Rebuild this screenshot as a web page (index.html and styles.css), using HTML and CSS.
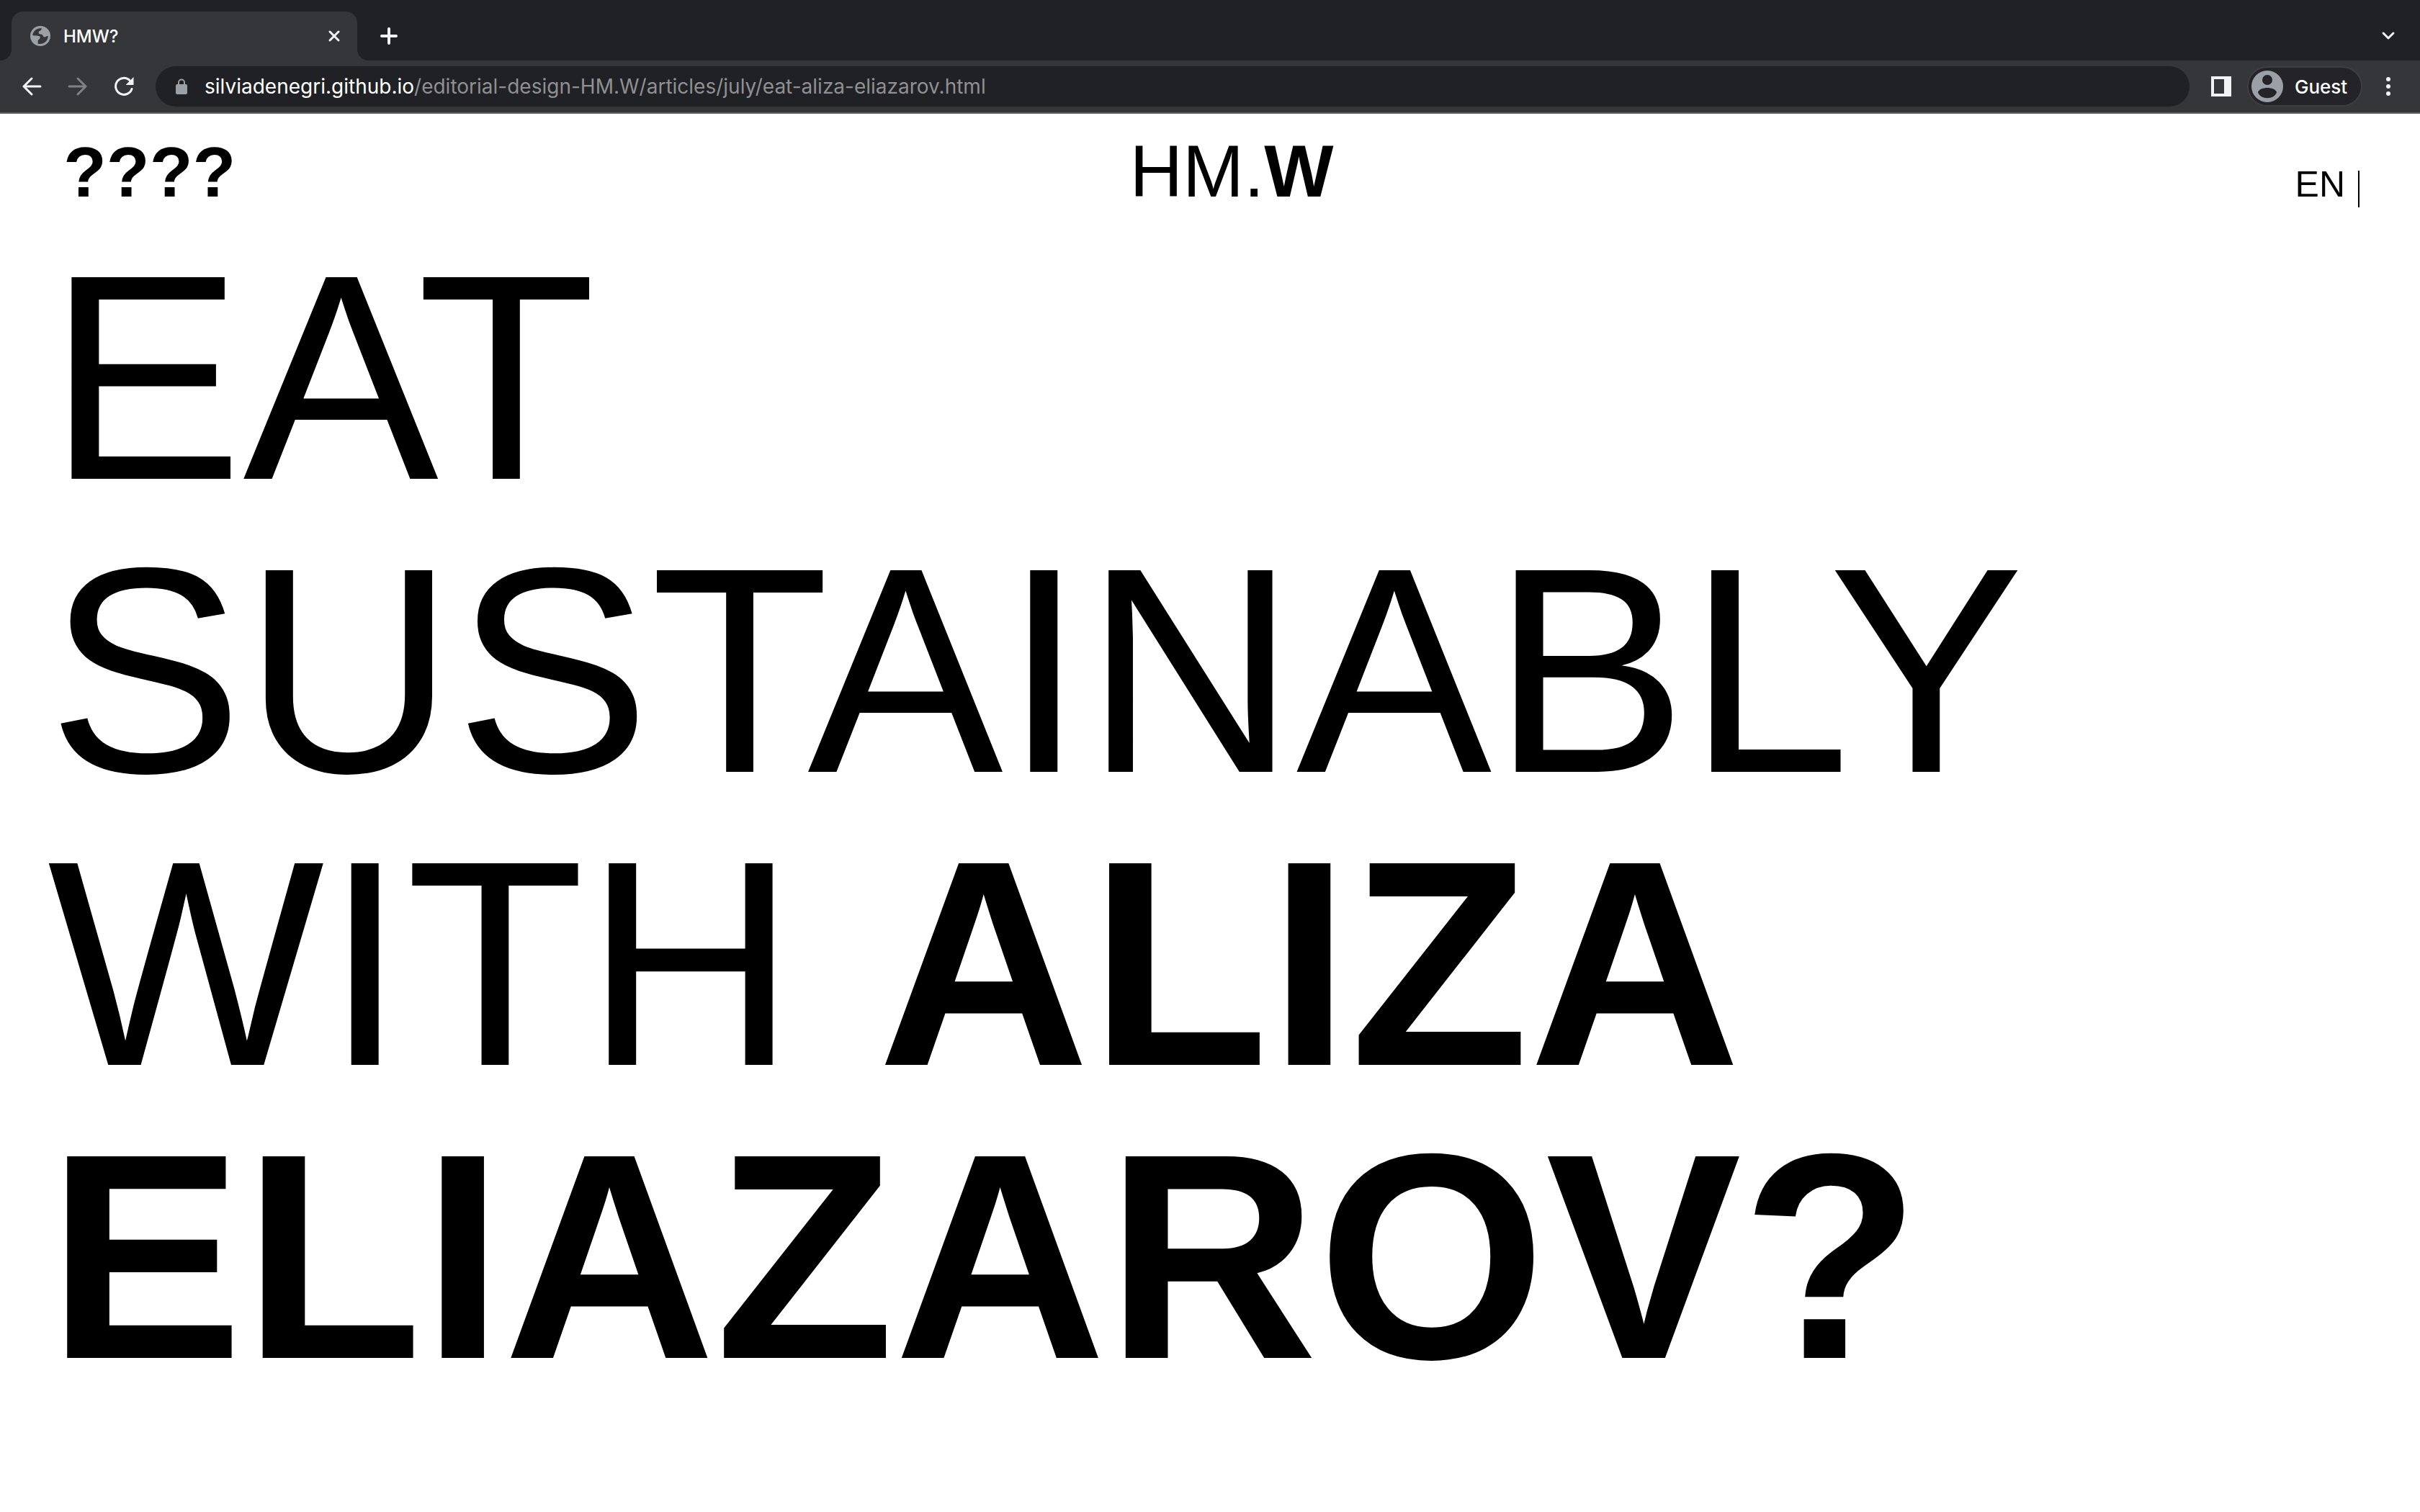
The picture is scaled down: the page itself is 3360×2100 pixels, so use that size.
FILE: index.html
```html
<!DOCTYPE html>
<html lang="en">
<head>
<meta charset="utf-8">
<title>HMW?</title>
<link rel="stylesheet" href="styles.css">
</head>
<body>
<div class="browser">
  <div class="tabstrip">
    <div class="tab">
      <svg class="favicon" viewBox="0 0 28 28" aria-hidden="true"><circle cx="14" cy="14" r="14" fill="#9aa0a6"/><path d="M16 3.300C9 2.500 4 7 3.200 13C6 14 9 13.600 11.500 14C13.500 14.500 13.300 16.500 12.800 18C12 19 10.500 19 10.500 21C10.500 23 10.200 24 10.400 24.400C17 26.500 24.500 22 24.800 14C22.500 13.500 22 15.500 20 15.500C17.500 15.500 18 12.200 15.500 11.800C13 11.500 11.500 11 11.500 9C11.500 7 15.500 7 16 3.300Z" fill="#35363a"/><path d="M3.200 14Q9 13.500 12.500 14Q14.500 15 13 18L10.500 19.500V24.400Q3.500 21.500 3.200 14Z" fill="#9aa0a6"/></svg>
      <span class="tab-title">HMW?</span>
      <button class="icon-button" aria-label="Close tab"><svg width="16" height="16" viewBox="0 0 16 16"><path d="M2 2L14 14M14 2L2 14"/></svg></button>
    </div>
    <button class="icon-button new-tab" aria-label="New tab"><svg width="24" height="24" viewBox="0 0 24 24"><path d="M12 2V22M2 12H22"/></svg></button>
    <button class="icon-button tab-search" aria-label="Search tabs"><svg width="20" height="14" viewBox="0 0 20 14"><path d="M3 3L10 10L17 3"/></svg></button>
  </div>
  <div class="toolbar">
    <div class="nav-buttons">
      <button class="icon-button" aria-label="Back"><svg width="28" height="28" viewBox="0 0 28 28"><path d="M26 14H3M14 3L3 14L14 25"/></svg></button>
      <button class="icon-button" aria-label="Forward" disabled><svg width="28" height="28" viewBox="0 0 28 28"><path d="M2 14H25M14 3L25 14L14 25"/></svg></button>
      <button class="icon-button" aria-label="Reload"><svg width="28" height="28" viewBox="0 0 28 28"><path d="M25 17.500A11.500 11.500 0 1 1 22 5.500"/><path class="solid" d="M27.500 1V12H16.500Z"/></svg></button>
    </div>
    <div class="omnibox">
      <svg class="lock" viewBox="0 0 16 22" aria-hidden="true"><path d="M4 9V5.500A4 4 0 0 1 12 5.500V9" fill="none" stroke="#9aa0a6" stroke-width="2"/><rect y="8" width="16" height="14" rx="2" fill="#9aa0a6"/></svg>
      <div class="url" role="textbox" aria-label="Address">silviadenegri.github.io<span class="path">/editorial-design-HM.W/articles/july/eat-aliza-eliazarov.html</span></div>
    </div>
    <button class="icon-button" aria-label="Side panel"><svg width="28" height="28" viewBox="0 0 28 28"><path class="solid" fill-rule="evenodd" d="M0 0H28V28H0ZM4 4V24H18V4Z"/></svg></button>
    <button class="profile">
      <svg width="44" height="44" viewBox="0 0 44 44" aria-hidden="true"><circle cx="22" cy="22" r="22" fill="#9aa0a6"/><circle cx="22" cy="13" r="7" fill="#242327"/><path d="M9 30C12 22 32 22 35 30C32 41 12 41 9 30Z" fill="#242327"/></svg>
      Guest
    </button>
    <button class="icon-button" aria-label="Menu"><svg width="8" height="28" viewBox="0 0 8 28"><circle class="solid" cx="4" cy="4" r="3"/><circle class="solid" cx="4" cy="14" r="3"/><circle class="solid" cx="4" cy="24" r="3"/></svg></button>
  </div>
</div>
<header class="site-header">
  <a class="questions" href="#">????</a>
  <a class="logo" href="#">HM.<b>W</b></a>
  <a class="language" href="#">EN</a>
</header>
<main>
  <h1>EAT<br>SUSTAINABLY<br>WITH <b>ALIZA<br>ELIAZAROV?</b></h1>
</main>
</body>
</html>
```
FILE: styles.css
```css
* { box-sizing: border-box; }

body {
  margin: 0;
  background: #fff;
  color: #000;
  font-family: "Liberation Sans", Arial, sans-serif;
}

a { color: inherit; text-decoration: none; }

button {
  border: 0;
  padding: 0;
  background: none;
  color: #fff;
  font: inherit;
}

/* Browser bars */
.browser {
  background: #35363a;
  border-bottom: 2px solid #5f6064;
  color: #fff;
  font-family: Inter, sans-serif;
}

.tabstrip {
  display: flex;
  align-items: center;
  height: 84px;
  padding: 16px 32px 0 16px;
  background: #202124;
}

.tab {
  position: relative;
  display: flex;
  align-items: center;
  width: 480px;
  height: 68px;
  padding: 0 24px 0 26px;
  border-radius: 16px 16px 0 0;
  background: #35363a;
  font-size: 24px;
  font-weight: 500;
}

/* Curved feet where the tab meets the toolbar */
.tab::before,
.tab::after {
  content: "";
  position: absolute;
  bottom: 0;
  width: 16px;
  height: 16px;
}

.tab::before {
  left: -16px;
  background: radial-gradient(circle at 0 0, #202124 16px, #35363a 16px);
}

.tab::after {
  right: -16px;
  background: radial-gradient(circle at 100% 0, #202124 16px, #35363a 16px);
}

.favicon { width: 28px; height: 28px; }
.tab-title { flex: 1; margin-left: 18px; }

.icon-button { display: flex; color: #f1f3f4; }
.icon-button:disabled { color: #808184; }

.icon-button path {
  fill: none;
  stroke: currentColor;
  stroke-width: 3;
  stroke-linecap: round;
  stroke-linejoin: round;
}

.icon-button .solid { fill: currentColor; stroke: none; }

.new-tab { margin-left: 32px; }
.new-tab path { stroke-width: 4; }
.tab-search { margin-left: auto; margin-right: 2px; }

.toolbar {
  display: flex;
  align-items: center;
  height: 72px;
  padding: 0 40px 0 30px;
}

.nav-buttons { display: flex; gap: 36px; }

.omnibox {
  flex: 1;
  display: flex;
  align-items: center;
  height: 56px;
  margin: 0 30px;
  padding: 0 28px;
  border-radius: 28px;
  background: #202124;
  font-size: 28px;
}

.lock { width: 16px; height: 22px; }
.url { margin-left: 24px; }
.path { color: #8f9093; }

.profile {
  display: flex;
  align-items: center;
  gap: 16px;
  width: 160px;
  height: 56px;
  margin: 0 32px 0 22px;
  padding: 0 4px;
  border: 2px solid #3f3e43;
  border-radius: 28px;
  background: #242327;
  font-size: 26px;
  font-weight: 500;
}

/* Page */
.site-header {
  display: grid;
  grid-template-columns: 1fr auto 1fr;
  align-items: baseline;
  padding: 20px 84px 20px 88px;
  font-size: 102px;
  line-height: 120px;
}

.questions { font-size: 98px; font-weight: 700; }
.logo { padding-left: 56px; }

.language {
  justify-self: end;
  padding-right: 18px;
  padding-bottom: 12px;
  border-right: 2px solid #000;
  font-size: 50px;
  line-height: 39px;
}

h1 {
  margin: 0;
  padding: 2px 66px 0;
  font-size: 407px;
  font-weight: 400;
  line-height: 407px;
}
```
